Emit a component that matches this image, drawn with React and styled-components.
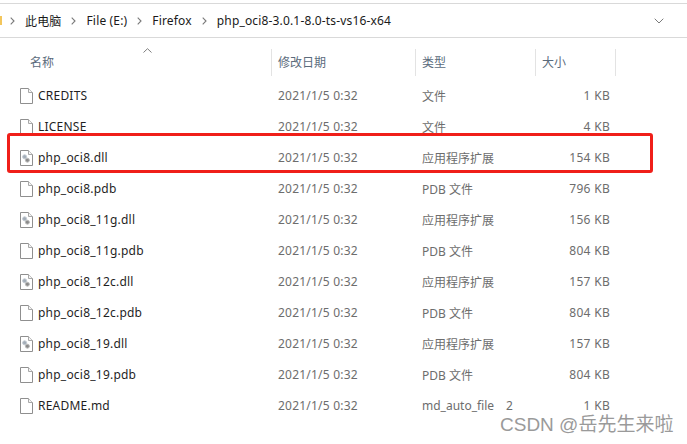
import React from "react";
import styled, { createGlobalStyle } from "styled-components";

const Global = createGlobalStyle`
  html, body { margin: 0; padding: 0; background: #fff; }
  #root { width: 687px; height: 444px; overflow: hidden; }
`;
const FONT = `"Noto Sans", "Noto Sans CJK SC", sans-serif`;

const Page = styled.div`
  position: relative; width: 687px; height: 444px; background: #fff; overflow: hidden;
  font-family: ${FONT}; font-size: 12px; display: flex; flex-direction: column; padding-top: 3px; box-sizing: border-box;
`;
const AddressBar = styled.div`
  height: 35px; flex: none; box-sizing: border-box;
  border-top: 1px solid #d9d9d9; border-bottom: 1px solid #d9d9d9;
  display: flex; align-items: center; color: #1a1a1a; font-size: 12px;
`;
const FolderStub = styled.div`
  width: 2px; height: 9px; background: #f3c65c; flex: none;
`;
const Crumb = styled.span`
  white-space: nowrap; letter-spacing: 0.16px;
`;
const Sep = styled.svg`
  width: 5px; height: 8px; margin: 0 10px; flex: none;
  &:first-of-type { margin-left: 8px; }
`;
const Expand = styled.svg`
  width: 10px; height: 6px; margin-left: auto; margin-right: 23px; flex: none;
`;
const Header = styled.div`
  display: grid; grid-template-columns: 272px 144px 120px 80px; margin-top: 11px; height: 27px; position: relative; color: #5b6b7c; flex: none;
`;
const HeadCell = styled.div`
  box-sizing: border-box; padding-left: ${p => p.$pl || 6}px; border-right: 1px solid #e3e3e3;
  display: flex; align-items: center; padding-bottom: 2px; font-size: 12px;
`;
const Sort = styled.svg`
  position: absolute; left: 143px; top: -1px; width: 9px; height: 5px;
`;
const Rows = styled.div`
  display: flex; flex-direction: column; margin-top: 4px;
`;
const Row = styled.div`
  display: grid; grid-template-columns: 38px 240px 144px 120px 68px; height: 31px; align-items: center; color: #6d6d6d; font-size: 12px;
`;
const IconCell = styled.div`
  padding-left: 20px; display: flex; align-items: center;
`;
const Name = styled.div`
  color: #1f1f1f; white-space: nowrap; letter-spacing: 0.22px;
`;
const DateCell = styled.div`
  white-space: nowrap; letter-spacing: 0.22px;
`;
const Cell = styled.div`
  white-space: nowrap;
`;
const Size = styled.div`
  text-align: right; white-space: nowrap; letter-spacing: 0.3px;
`;
const Extra = styled.span`
  margin-left: 12px;
`;
const Highlight = styled.div`
  position: absolute; left: 7px; top: 133px; width: 646px; height: 40px; box-sizing: border-box;
  border: 3px solid #f01f19; border-radius: 3px;
`;
const Watermark = styled.div`
  position: absolute; left: 500px; top: 412px; font-size: 19px; line-height: 26px; color: #9a9a9a; white-space: nowrap;
  font-family: "Liberation Sans", "Noto Sans CJK SC", sans-serif;
`;

const FileIcon = ({ dll }) => (
  <svg width="13" height="16" viewBox="0 0 13 16">
    <path d="M.5.5h8l4 4v11H.5z" fill="#fff" stroke="#8f8f8f" />
    <path d="M8.5.5v4h4" fill="#f4f4f4" stroke="#a8a8a8" />
    {dll && (
      <g>
        <circle cx="4.6" cy="6.8" r="2" fill="#a3adb8" stroke="#c4cbd2" />
        <circle cx="7.4" cy="10.2" r="2" fill="#8a8a8a" stroke="#bdbdbd" />
      </g>
    )}
  </svg>
);

const Chevron = () => (
  <Sep viewBox="0 0 5 8">
    <path d="M.7.7 4 4 .7 7.3" fill="none" stroke="#7a7a7a" strokeWidth="1.1" />
  </Sep>
);

const files = [
  ["CREDITS", "文件", "1 KB", false],
  ["LICENSE", "文件", "4 KB", false],
  ["php_oci8.dll", "应用程序扩展", "154 KB", true],
  ["php_oci8.pdb", "PDB 文件", "796 KB", false],
  ["php_oci8_11g.dll", "应用程序扩展", "156 KB", true],
  ["php_oci8_11g.pdb", "PDB 文件", "804 KB", false],
  ["php_oci8_12c.dll", "应用程序扩展", "157 KB", true],
  ["php_oci8_12c.pdb", "PDB 文件", "804 KB", false],
  ["php_oci8_19.dll", "应用程序扩展", "157 KB", true],
  ["php_oci8_19.pdb", "PDB 文件", "804 KB", false],
  ["README.md", "md_auto_file", "1 KB", false, "2"],
];

export default function App() {
  return (
    <Page>
      <Global />
      <AddressBar>
        <FolderStub />
        <Chevron />
        <Crumb>此电脑</Crumb>
        <Chevron />
        <Crumb>File (E:)</Crumb>
        <Chevron />
        <Crumb>Firefox</Crumb>
        <Chevron />
        <Crumb>php_oci8-3.0.1-8.0-ts-vs16-x64</Crumb>
        <Expand viewBox="0 0 10 6">
          <path d="M.7.7 5 5 9.3.7" fill="none" stroke="#7a7a7a" />
        </Expand>
      </AddressBar>
      <Header>
        <Sort viewBox="0 0 9 5">
          <path d="M.5 4.5 4.5.7l4 3.8" fill="none" stroke="#7d7d7d" />
        </Sort>
        <HeadCell $pl={30}>名称</HeadCell>
        <HeadCell>修改日期</HeadCell>
        <HeadCell>类型</HeadCell>
        <HeadCell>大小</HeadCell>
      </Header>
      <Rows>
        {files.map(([name, type, size, dll, extra]) => (
          <Row key={name}>
            <IconCell><FileIcon dll={dll} /></IconCell>
            <Name>{name}</Name>
            <DateCell>2021/1/5 0:32</DateCell>
            <Cell>{type}{extra && <Extra>{extra}</Extra>}</Cell>
            <Size>{size}</Size>
          </Row>
        ))}
      </Rows>
      <Highlight />
      <Watermark>CSDN @岳先生来啦</Watermark>
    </Page>
  );
}
